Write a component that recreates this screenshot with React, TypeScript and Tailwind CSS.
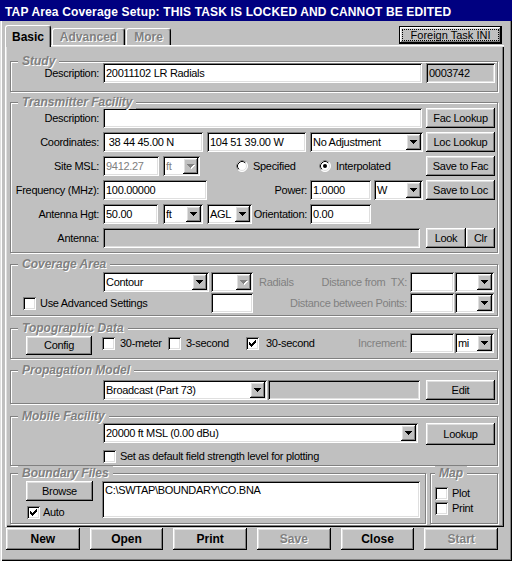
import React from "react";

// Win95 bevels
const raised = "shadow-[inset_-1px_-1px_#000,inset_1px_1px_#fff,inset_-2px_-2px_#808080,inset_2px_2px_#dfdfdf]";
const sunken = "shadow-[inset_1px_1px_#808080,inset_-1px_-1px_#fff,inset_2px_2px_#000,inset_-2px_-2px_#dfdfdf]";
const etched = "border border-[#808080] shadow-[inset_1px_1px_#fff,1px_1px_#fff]";
const embossed = "text-[#808080] [text-shadow:1px_1px_0_#fff]";

type Kids = { children?: React.ReactNode };

function Field({ w, value = "", bg = "bg-white", color = "text-black", h = "h-[20px]", className = "" }: { w: string; value?: string; bg?: string; color?: string; h?: string; className?: string }) {
  return (
    <div className={`${sunken} ${bg} ${color} ${w} ${h} ${className} shrink-0 flex items-center pl-[3px] pr-[2px] whitespace-pre overflow-hidden`}>
      {value}
    </div>
  );
}

function Arrow({ disabled }: { disabled?: boolean }) {
  const d = "M0 0h7v1H0zM1 1h5v1H1zM2 2h3v1H2zM3 3h1v1H3z";
  return (
    <div className={`${raised} bg-[#c0c0c0] w-[15px] h-full shrink-0 flex items-center justify-center`}>
      <svg width="8" height="5" viewBox="0 0 8 5" shapeRendering="crispEdges">
        {disabled && <path d={d} fill="#fff" transform="translate(1 1)" />}
        <path d={d} fill={disabled ? "#808080" : "#000"} />
      </svg>
    </div>
  );
}

function Combo({ w, value = "", disabled, color = "text-black", className = "" }: { w: string; value?: string; disabled?: boolean; color?: string; className?: string }) {
  return (
    <div className={`${sunken} bg-white ${w} ${className} h-[20px] shrink-0 flex items-stretch p-[2px]`}>
      <div className={`flex-1 flex items-center pl-[1px] overflow-hidden whitespace-nowrap ${color}`}>{value}</div>
      <Arrow disabled={disabled} />
    </div>
  );
}

function Btn({ w, h = "h-[20px]", className = "", children, bold, disabled }: Kids & { w: string; h?: string; className?: string; bold?: boolean; disabled?: boolean }) {
  return (
    <div
      className={`${raised} bg-[#c0c0c0] ${w} ${h} ${className} shrink-0 flex items-center justify-center ${bold ? "font-bold text-[12px] tracking-normal" : ""} ${disabled ? embossed : ""}`}
    >
      {children}
    </div>
  );
}

function Check({ checked }: { checked?: boolean }) {
  return (
    <div className={`${sunken} bg-white w-[13px] h-[13px] shrink-0 flex items-center justify-center`}>
      {checked && (
        <svg width="7" height="7" viewBox="0 0 7 7" shapeRendering="crispEdges">
          <path d="M6 0h1v1H6zM5 1h2v1H5zM0 2h1v1H0zM4 2h3v1H4zM0 3h2v1H0zM3 3h3v1H3zM0 4h5v1H0zM1 5h3v1H1zM2 6h1v1H2z" fill="#000" />
        </svg>
      )}
    </div>
  );
}

function CheckItem({ checked, label, className = "", gap = "gap-[5px]" }: { checked?: boolean; label: string; className?: string; gap?: string }) {
  return (
    <div className={`flex items-center ${gap} ${className} shrink-0`}>
      <Check checked={checked} />
      <span className="whitespace-nowrap">{label}</span>
    </div>
  );
}

function Radio({ checked }: { checked?: boolean }) {
  return (
    <svg width="12" height="12" viewBox="0 0 12 12" className="shrink-0">
      <circle cx="6" cy="6" r="5.5" fill="#fff" stroke="#fff" />
      <path d="M2.11 9.89A5.5 5.5 0 0 1 9.89 2.11" fill="none" stroke="#808080" />
      <circle cx="6" cy="6" r="4.5" fill="#fff" stroke="#dfdfdf" />
      <path d="M2.82 9.18A4.5 4.5 0 0 1 9.18 2.82" fill="none" stroke="#000" />
      {checked && <circle cx="6" cy="6" r="2" fill="#000" />}
    </svg>
  );
}

function Group({ label, className = "", legendPos = "left-[7px]", children }: Kids & { label: string; className?: string; legendPos?: string }) {
  return (
    <div className={`relative shrink-0 ${etched} ${className}`}>
      <span className={`absolute -top-[8px] ${legendPos} px-[4px] bg-[#c0c0c0] font-bold italic text-[12px] leading-[14px] tracking-normal ${embossed}`}>
        {label}
      </span>
      {children}
    </div>
  );
}

function Label({ children, w = "w-[88px]" }: Kids & { w?: string }) {
  return <div className={`${w} shrink-0 text-right whitespace-nowrap`}>{children}</div>;
}

export default function App() {
  return (
    <div className="w-[512px] h-[561px] bg-[#c0c0c0] flex flex-col font-['Liberation_Sans',Arial,sans-serif] text-[11px] tracking-[-0.3px] text-black leading-none select-none">
      {/* Title bar */}
      <div className="h-[21px] shrink-0 bg-[#000080] text-white font-bold text-[12px] tracking-[0.15px] flex items-center pl-[5px] pt-[2px] whitespace-nowrap">
        TAP Area Coverage Setup: THIS TASK IS LOCKED AND CANNOT BE EDITED
      </div>

      <div className="flex-1 flex flex-col pl-[5px] pr-[8px] shadow-[inset_1px_0_#dfdfdf,inset_2px_0_#fff,inset_-1px_-1px_#000,inset_-2px_-2px_#808080]">
        {/* Tabs */}
        <div className="h-[24px] shrink-0 flex items-end">
          <div className="relative z-10 -mb-[2px] h-[22px] w-[46px] bg-[#c0c0c0] border-t border-l border-white border-r border-r-black rounded-t-[3px] shadow-[inset_-1px_0_#808080] flex items-center justify-center font-bold text-[12px] tracking-normal">
            Basic
          </div>
          <div className={`ml-[1px] h-[17px] w-[73px] bg-[#c0c0c0] border-t border-l border-white border-r border-r-black rounded-t-[3px] shadow-[inset_-1px_0_#808080] flex items-center justify-center font-bold text-[12px] tracking-normal ${embossed}`}>
            Advanced
          </div>
          <div className={`ml-[1px] h-[17px] w-[45px] bg-[#c0c0c0] border-t border-l border-white border-r border-r-black rounded-t-[3px] shadow-[inset_-1px_0_#808080] flex items-center justify-center font-bold text-[12px] tracking-normal ${embossed}`}>
            More
          </div>
          <div className="ml-auto mr-[2px] self-start mt-[5px] w-[103px] h-[18px] border border-black">
            <div className={`${raised} bg-[#c0c0c0] w-full h-full flex items-center justify-center p-[2px]`}>
              <span className="w-full h-full border border-dotted border-black flex items-center justify-center tracking-normal">
                Foreign Task INI
              </span>
            </div>
          </div>
        </div>

        {/* Tab panel */}
        <div className="relative w-[499px] h-[482px] shrink-0 pl-[5px] pt-[16px] flex flex-col shadow-[inset_1px_1px_#fff,inset_2px_2px_#dfdfdf,inset_-1px_-1px_#000,inset_-2px_-2px_#808080]">
          {/* Study */}
          <Group label="Study" className="w-[488px] h-[31px] pt-[1px]">
            <div className="flex items-center h-[20px]">
              <Label>Description:</Label>
              <Field w="w-[319px]" className="ml-[4px]" value="20011102 LR Radials" />
              <Field w="w-[69px]" className="ml-[4px]" bg="bg-[#c0c0c0]" value="0003742" />
            </div>
          </Group>

          {/* Transmitter Facility */}
          <Group label="Transmitter Facility" className="mt-[10px] w-[488px] h-[151px] pt-[5px]">
            <div className="flex flex-col gap-[4px]">
              <div className="flex items-center h-[20px]">
                <Label>Description:</Label>
                <Field w="w-[319px]" className="ml-[4px]" />
                <Btn w="w-[69px]" className="ml-[4px]">Fac Lookup</Btn>
              </div>
              <div className="flex items-center h-[20px]">
                <Label>Coordinates:</Label>
                <Field w="w-[100px]" className="ml-[4px]" value=" 38 44 45.00 N" />
                <Field w="w-[99px]" className="ml-[4px]" value="104 51 39.00 W" />
                <Combo w="w-[113px]" className="ml-[4px]" value="No Adjustment" />
                <Btn w="w-[69px]" className="ml-[3px]">Loc Lookup</Btn>
              </div>
              <div className="flex items-center h-[20px]">
                <Label>Site MSL:</Label>
                <Field w="w-[56px]" className="ml-[4px]" color="text-[#808080]" value="9412.27" />
                <Combo w="w-[37px]" className="ml-[4px]" value="ft" disabled color="text-[#808080]" />
                <div className="ml-[36px] w-[83px] flex items-center gap-[5px] shrink-0">
                  <Radio />
                  <span>Specified</span>
                </div>
                <div className="flex items-center gap-[5px] shrink-0">
                  <Radio checked />
                  <span>Interpolated</span>
                </div>
                <Btn w="w-[69px]" className="ml-auto mr-[2px]">Save to Fac</Btn>
              </div>
              <div className="flex items-center h-[20px]">
                <Label>Frequency (MHz):</Label>
                <Field w="w-[104px]" className="ml-[4px]" value="100.00000" />
                <Label w="w-[100px]">Power:</Label>
                <Field w="w-[61px]" className="ml-[3px]" value="1.0000" />
                <Combo w="w-[49px]" className="ml-[3px]" value="W" />
                <Btn w="w-[69px]" className="ml-[3px]">Save to Loc</Btn>
              </div>
              <div className="flex items-center h-[20px]">
                <Label>Antenna Hgt:</Label>
                <Field w="w-[55px]" className="ml-[4px]" value="50.00" />
                <Combo w="w-[40px]" className="ml-[5px]" value="ft" />
                <Combo w="w-[45px]" className="ml-[4px]" value="AGL" />
                <Label w="w-[55px]">Orientation:</Label>
                <Field w="w-[61px]" className="ml-[3px]" value="0.00" />
              </div>
              <div className="flex items-center h-[20px]">
                <Label>Antenna:</Label>
                <Field w="w-[317px]" className="ml-[4px]" bg="bg-[#c0c0c0]" />
                <Btn w="w-[40px]" className="ml-[6px]">Look</Btn>
                <Btn w="w-[29px]">Clr</Btn>
              </div>
            </div>
          </Group>

          {/* Coverage Area */}
          <Group label="Coverage Area" className="mt-[11px] w-[488px] h-[52px] pt-[7px]">
            <div className="flex items-center h-[20px]">
              <Combo w="w-[106px]" className="ml-[92px]" value="Contour" />
              <Combo w="w-[42px]" className="ml-[2px]" disabled />
              <span className="ml-[6px] text-[#808080]">Radials</span>
              <span className="ml-auto text-[#808080] whitespace-pre">Distance from  TX:</span>
              <Field w="w-[44px]" className="ml-[3px]" />
              <Combo w="w-[39px]" className="ml-[1px] mr-[3px]" />
            </div>
            <div className="flex items-center h-[20px] mt-[1px]">
              <div className="ml-[12px] w-[188px] shrink-0">
                <CheckItem label="Use Advanced Settings" gap="gap-[4px]" />
              </div>
              <Field w="w-[42px]" />
              <span className="ml-auto text-[#808080] whitespace-nowrap">Distance between Points:</span>
              <Field w="w-[44px]" className="ml-[3px]" />
              <Combo w="w-[39px]" className="ml-[1px] mr-[3px]" />
            </div>
          </Group>

          {/* Topographic Data */}
          <Group label="Topographic Data" className="mt-[12px] w-[488px] h-[31px] pt-[4px]">
            <div className="flex items-start">
              <Btn w="w-[66px]" h="h-[19px]" className="ml-[15px] mt-[3px]">Config</Btn>
              <div className="ml-[10px] w-[66px] h-[20px] flex items-center shrink-0">
                <CheckItem label="30-meter" />
              </div>
              <div className="w-[78px] h-[20px] flex items-center shrink-0">
                <CheckItem label="3-second" />
              </div>
              <div className="h-[20px] flex items-center shrink-0">
                <CheckItem label="30-second" checked gap="gap-[7px]" />
              </div>
              <div className="ml-auto h-[20px] flex items-center text-[#808080]">Increment:</div>
              <Field w="w-[44px]" className="ml-[3px]" />
              <Combo w="w-[39px]" className="ml-[1px] mr-[3px]" value="mi" />
            </div>
          </Group>

          {/* Propagation Model */}
          <Group label="Propagation Model" className="mt-[11px] w-[488px] h-[34px] pt-[9px]">
            <div className="flex items-center h-[20px]">
              <Combo w="w-[164px]" className="ml-[92px]" value="Broadcast (Part 73)" />
              <Field w="w-[152px]" className="ml-[1px]" bg="bg-[#c0c0c0]" />
              <Btn w="w-[69px]" className="ml-[6px]">Edit</Btn>
            </div>
          </Group>

          {/* Mobile Facility */}
          <Group label="Mobile Facility" className="mt-[12px] w-[488px] h-[50px] pt-[6px]">
            <div className="flex items-start">
              <Combo w="w-[315px]" className="ml-[92px]" value="20000 ft MSL (0.00 dBu)" />
              <Btn w="w-[69px]" h="h-[22px]" className="ml-[8px]">Lookup</Btn>
            </div>
            <CheckItem label="Set as default field strength level for plotting" className="ml-[92px] mt-[5px]" gap="gap-[4px]" />
          </Group>

          {/* Boundary Files + Map */}
          <div className="mt-[7px] flex">
            <Group label="Boundary Files" className="w-[416px] h-[51px] pt-[7px]">
              <div className="flex items-start">
                <div className="ml-[15px] w-[67px] flex flex-col shrink-0">
                  <Btn w="w-[67px]">Browse</Btn>
                  <CheckItem label="Auto" checked className="ml-[1px] mt-[5px]" gap="gap-[3px]" />
                </div>
                <Field w="w-[318px]" h="h-[37px]" className="ml-[9px] !items-start pt-[4px]" value="C:\SWTAP\BOUNDARY\CO.BNA" />
              </div>
            </Group>
            <Group label="Map" legendPos="left-[4px]" className="ml-[4px] w-[68px] h-[51px] pt-[13px]">
              <CheckItem label="Plot" className="ml-[4px]" gap="gap-[4px]" />
              <CheckItem label="Print" className="ml-[4px] mt-[2px]" gap="gap-[4px]" />
            </Group>
          </div>
        </div>

        {/* Bottom buttons */}
        <div className="mt-[1px] ml-[1px] w-[492px] h-[22px] shrink-0 flex gap-[10px]">
          <Btn w="flex-1" h="h-[22px]" bold>New</Btn>
          <Btn w="flex-1" h="h-[22px]" bold>Open</Btn>
          <Btn w="flex-1" h="h-[22px]" bold>Print</Btn>
          <Btn w="flex-1" h="h-[22px]" bold disabled>Save</Btn>
          <Btn w="flex-1" h="h-[22px]" bold>Close</Btn>
          <Btn w="flex-1" h="h-[22px]" bold disabled>Start</Btn>
        </div>
      </div>
    </div>
  );
}
